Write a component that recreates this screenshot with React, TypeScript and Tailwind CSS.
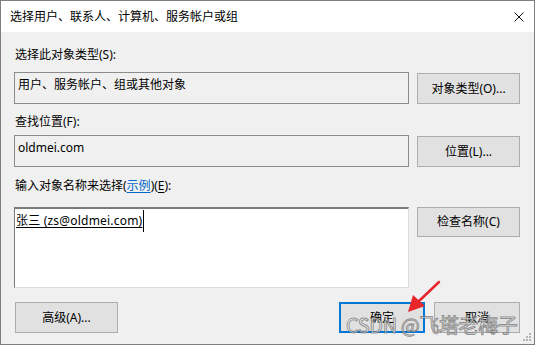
import type { ReactNode } from 'react';

const font = "font-['Segoe_UI','Noto_Sans','Noto_Sans_CJK_SC',sans-serif]";

function DlgButton({ children, className = '' }: { children: ReactNode; className?: string }) {
  return (
    <div
      className={`flex items-center justify-center bg-[#e1e1e1] border border-[#adadad] text-[12px] leading-[16px] ${className}`}
    >
      {children}
    </div>
  );
}

export default function App() {
  return (
    <div
      className={`relative w-[535px] h-[345px] border border-[#7f7f7f] bg-[#f0f0f0] flex flex-col text-[12px] leading-[16px] text-black ${font}`}
    >
      {/* title bar */}
      <div className="h-[31px] shrink-0 bg-white flex items-center justify-between pl-[9px] pr-[10px]">
        <span className="text-[12px]">选择用户、联系人、计算机、服务帐户或组</span>
        <svg width="10" height="10" viewBox="0 0 10 10" className="shrink-0">
          <path d="M0.5 0.5 L9.5 9.5 M9.5 0.5 L0.5 9.5" stroke="#111" strokeWidth="1" fill="none" />
        </svg>
      </div>

      {/* body */}
      <div className="flex-1 flex flex-col pl-[13px] pr-[14px] pt-[15px]">
        <div className="h-[16px] pl-px">选择此对象类型(S):</div>
        <div className="mt-[9px] flex items-start gap-[8px]">
          <div className="flex-1 h-[32px] border border-[#8c8c8c] pt-[4px] pl-[3px]">
            用户、服务帐户、组或其他对象
          </div>
          <DlgButton className="w-[103px] h-[31px] mt-px">对象类型(O)...</DlgButton>
        </div>

        <div className="mt-[10px] h-[16px] pl-px">查找位置(F):</div>
        <div className="mt-[5px] flex items-start gap-[8px]">
          <div className="flex-1 h-[32px] border border-[#8c8c8c] pt-[4px] pl-[3px]">oldmei.com</div>
          <DlgButton className="w-[103px] h-[31px] mt-px">位置(L)...</DlgButton>
        </div>

        <div className="mt-[11px] h-[16px] pl-px">
          输入对象名称来选择(<span className="text-[#0066cc] underline underline-offset-2">示例</span>)(
          <span className="underline underline-offset-2">E</span>):
        </div>
        <div className="mt-[13px] flex items-start gap-[8px]">
          <div className="flex-1 h-[81px] bg-white border-t-2 border-l border-r border-b border-t-[#7a7a7a] border-l-[#7a7a7a] border-r-[#dcdcdc] border-b-[#dcdcdc] pt-[4px] pl-px">
            <div className="flex items-center h-[16px]">
              <span className="underline underline-offset-2 whitespace-nowrap tracking-[0.2px]">张三 (zs@oldmei.com)</span>
              <span className="ml-px w-px h-[22px] bg-black shrink-0" />
            </div>
          </div>
          <DlgButton className="w-[103px] h-[30px]">检查名称(C)</DlgButton>
        </div>

        <div className="mt-[14px] flex items-start">
          <DlgButton className="ml-[1px] w-[103px] h-[31px]">高级(A)...</DlgButton>
          <div className="flex-1" />
          <div className="flex gap-[9px]">
            <DlgButton className="w-[86px] h-[31px] !border-2 !border-[#0078d7]">确定</DlgButton>
            <DlgButton className="w-[86px] h-[31px]">取消</DlgButton>
          </div>
        </div>
      </div>

      {/* resize grip */}
      <svg width="10" height="10" viewBox="0 0 10 10" className="absolute right-[2px] bottom-[2px]">
        <rect x="7" y="1" width="2" height="2" fill="#b4b4b4" />
        <rect x="4" y="4" width="2" height="2" fill="#b4b4b4" />
        <rect x="7" y="4" width="2" height="2" fill="#b4b4b4" />
        <rect x="1" y="7" width="2" height="2" fill="#b4b4b4" />
        <rect x="4" y="7" width="2" height="2" fill="#b4b4b4" />
        <rect x="7" y="7" width="2" height="2" fill="#b4b4b4" />
      </svg>

      {/* red annotation arrow */}
      <svg
        width="535"
        height="345"
        viewBox="0 0 535 345"
        className="absolute -left-px -top-px pointer-events-none"
      >
        <line x1="439" y1="282" x2="418" y2="302" stroke="#e8262b" strokeWidth="2.5" strokeLinecap="round" />
        <polygon points="408,312 413,295 425,306" fill="#e8262b" />
      </svg>

      {/* watermark */}
      <div className="absolute left-[345px] top-[311px] text-[20px] leading-[26px] tracking-[-0.4px] whitespace-nowrap text-[#ffffffb0] font-['Noto_Sans_CJK_SC',sans-serif] [-webkit-text-stroke:1px_rgba(80,80,80,0.6)] pointer-events-none">
        CSDN @飞塔老梅子
      </div>
    </div>
  );
}
